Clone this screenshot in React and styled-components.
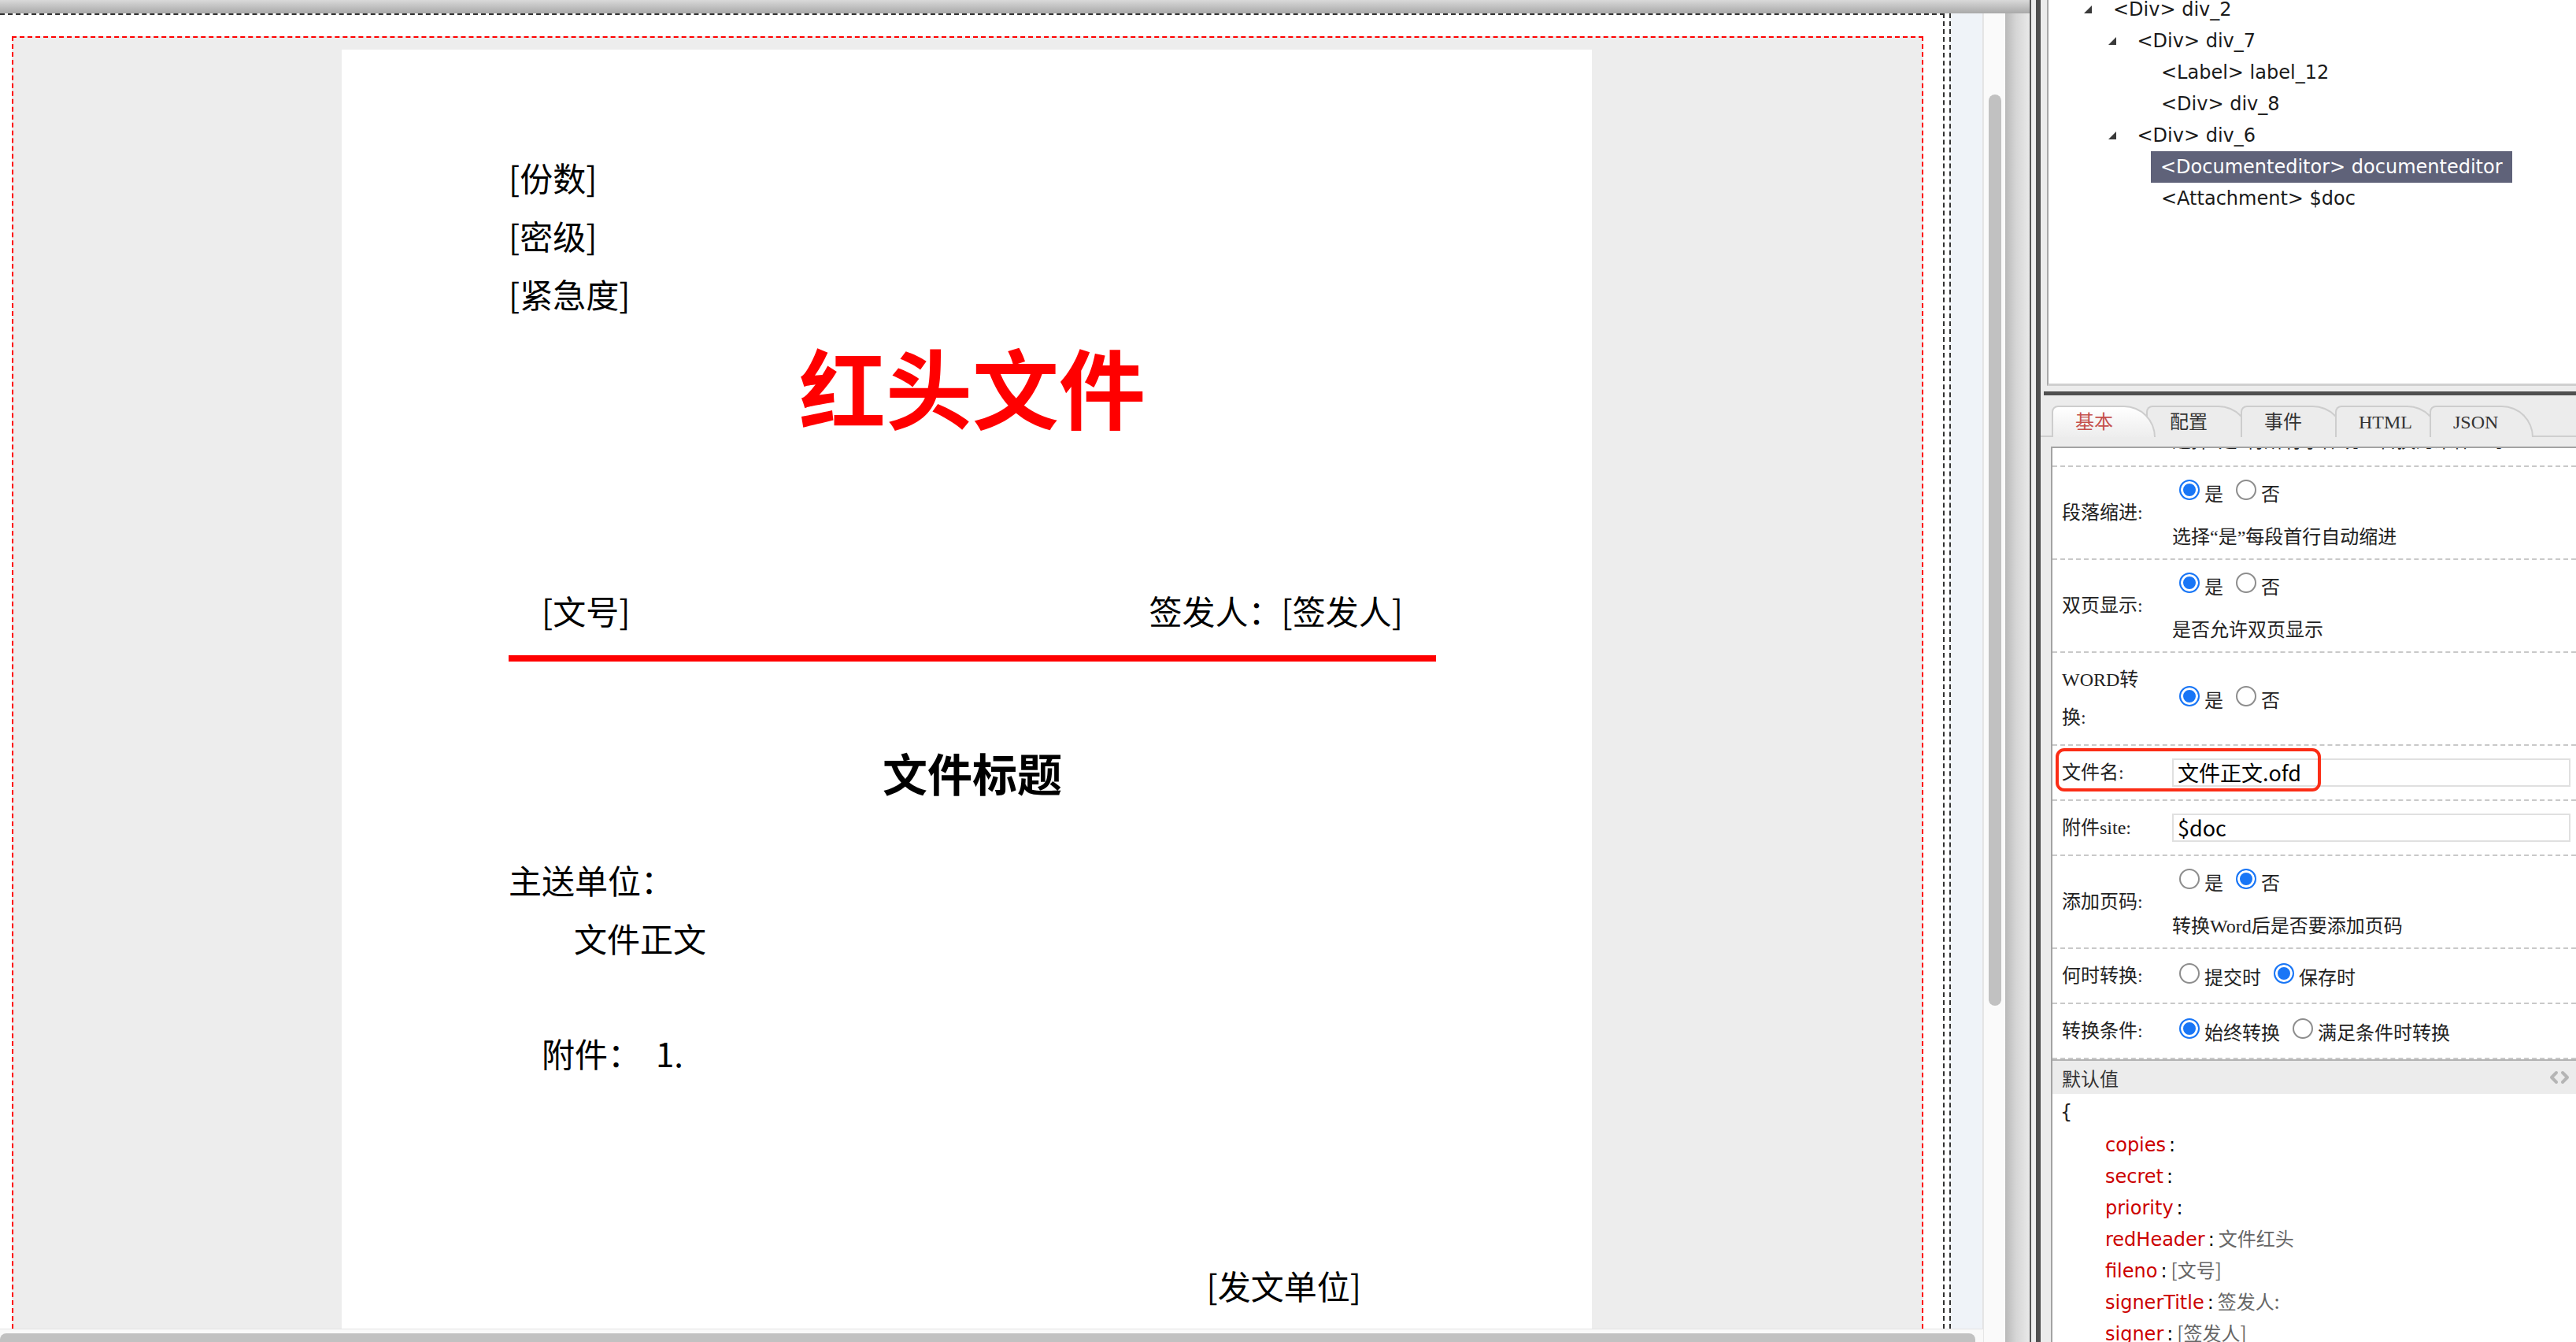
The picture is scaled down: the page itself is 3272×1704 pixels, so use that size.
/* --- Packages and Components --- */
import React from "react";
import styled, { createGlobalStyle } from "styled-components";

/* --- Data --- */
const treeData = [
  { level: 0, toggle: true, text: "<Div> div_2" },
  { level: 1, toggle: true, text: "<Div> div_7" },
  { level: 2, text: "<Label> label_12" },
  { level: 2, text: "<Div> div_8" },
  { level: 1, toggle: true, text: "<Div> div_6" },
  { level: 2, text: "<Documenteditor> documenteditor", selected: true },
  { level: 2, text: "<Attachment> $doc" }
];

const tabs = ["基本", "配置", "事件", "HTML", "JSON"];

const jsonRows = [
  ["copies", ""],
  ["secret", ""],
  ["priority", ""],
  ["redHeader", "文件红头"],
  ["fileno", "[文号]"],
  ["signerTitle", "签发人:"],
  ["signer", "[签发人]"]
];

const SERIF = `"Liberation Serif", "Noto Sans CJK SC", serif`;
const SANS = `"Noto Sans CJK SC", "Liberation Sans", sans-serif`;
const UI = `"DejaVu Sans", "Noto Sans CJK SC", sans-serif`;

/* --- Styles --- */
const GlobalStyle = createGlobalStyle`
  html, body {
    margin: 0;
    padding: 0;
    overflow: hidden;
    background: #fff;
  }
`;

const Screen = styled.div`
  display: flex;
  width: 3272px;
  height: 1704px;
  overflow: hidden;
`;

/* editor side */
const EditorColumn = styled.div`
  width: 2578px;
  display: flex;
  flex-direction: column;
`;

const TopStrip = styled.div`
  height: 17px;
  flex: none;
  background: linear-gradient(#d9d9d9, #a9a9a9);
`;

const EditorBody = styled.div`
  flex: 1;
  display: flex;
  min-height: 0;
`;

const Viewport = styled.div`
  width: 2519px;
  display: flex;
  flex-direction: column;
`;

const ViewRow = styled.div`
  flex: 1;
  display: flex;
  min-height: 0;
  overflow: hidden;
  background: #fff;
`;

const CanvasFrame = styled.div`
  width: 2470px;
  box-sizing: border-box;
  border-top: 2px dashed #333;
  border-right: 2px dashed #333;
  padding: 27px 0 0 15px;
  overflow: hidden;
`;

const RedBox = styled.div`
  width: 2428px;
  height: 100%;
  box-sizing: border-box;
  border: 2px dashed #ff0000;
  border-bottom: none;
  background: #ededed;
  padding: 15px 0 0 417px;
`;

const Gutter = styled.div`
  width: 6px;
  background: #fff;
`;

const SideStrip = styled.div`
  flex: 1;
  border-left: 2px dashed #333;
  border-right: 1px solid #e2e2e2;
  background: #eff3f8;
`;

const HScroll = styled.div`
  height: 17px;
  flex: none;
  box-sizing: border-box;
  border-top: 1px solid #e4e4e4;
  background: #f9f9f9;
  padding-top: 5px;
`;

const HThumb = styled.div`
  width: 2509px;
  height: 14px;
  border-radius: 8px 8px 0 0;
  background: #c1c1c1;
`;

const VScroll = styled.div`
  width: 28px;
  box-sizing: border-box;
  border-left: 1px solid #e6e6e6;
  background: #fafafa;
  padding: 103px 0 0 6px;
`;

const VThumb = styled.div`
  width: 16px;
  height: 1157px;
  border-radius: 8px;
  background: #c1c1c1;
`;

const ShadowEdge = styled.div`
  width: 31px;
  background: linear-gradient(to right, #b9b9b9, #d6d6d6 45%, #e9e9e9);
`;

/* document page */
const Page = styled.div`
  width: 1588px;
  height: 1800px;
  box-sizing: border-box;
  background: #fff;
  padding: 125px 198px 0 212px;
  font-family: ${SANS};
  color: #000;
`;

const MetaLine = styled.div`
  font-size: 42px;
  line-height: 74px;
`;

const RedTitle = styled.div`
  margin-top: 14px;
  text-align: center;
  font-size: 110px;
  font-weight: 700;
  line-height: 130px;
  color: #ff0000;
`;

const SignerRow = styled.div`
  margin-top: 191px;
  display: flex;
  justify-content: space-between;
  padding: 0 42px;
  font-size: 42px;
  line-height: 60px;
`;

const RedRule = styled.div`
  margin-top: 27px;
  height: 8px;
  background: #ff0000;
`;

const DocTitle = styled.div`
  margin-top: 100px;
  text-align: center;
  font-size: 57px;
  font-weight: 700;
  line-height: 80px;
`;

const Para = styled.div`
  font-size: 42px;
  line-height: 74px;
  margin-top: ${p => p.$mt || 0}px;
  padding-left: ${p => p.$indent || 0}px;
  padding-right: ${p => p.$right || 0}px;
  text-align: ${p => (p.$alignRight ? "right" : "left")};
`;

const Gap = styled.span`
  display: inline-block;
  width: 19px;
`;

/* splitter */
const Divider = styled.div`
  width: 14px;
  box-sizing: border-box;
  border-left: 2px solid #565656;
  border-right: 6px solid #4f4f4f;
  background: #ededed;
`;

/* right panel */
const RightPanel = styled.div`
  flex: 1;
  display: flex;
  flex-direction: column;
  background: #ececec;
  min-width: 0;
`;

const TreeBox = styled.div`
  height: 490px;
  flex: none;
  box-sizing: border-box;
  margin-left: 8px;
  border-left: 2px solid #a9a9a9;
  border-bottom: 3px solid #cfcfcf;
  background: #fff;
  overflow: hidden;
`;

const TreeList = styled.div`
  margin-top: -8px;
  font-family: ${UI};
  font-size: 24px;
  color: #1a1a1a;
`;

const TreeRow = styled.div`
  height: 40px;
  display: flex;
  align-items: center;
  padding-left: ${p => 44 + p.$level * 30.5}px;
  white-space: nowrap;
`;

const Toggle = styled.span`
  width: 12px;
  height: 12px;
  margin-right: 26px;
  display: inline-flex;
  flex: none;
`;

const TreeLabel = styled.span`
  height: 40px;
  line-height: 40px;
  ${p =>
    p.$selected &&
    `
    background: #5f6279;
    color: #fff;
    padding: 0 12px;
    margin-left: -13px;
  `}
`;

const DarkBar = styled.div`
  height: 5px;
  flex: none;
  margin: 7px 0 0 4px;
  background: #505050;
`;

const TabStrip = styled.div`
  height: 53px;
  flex: none;
  box-sizing: border-box;
  display: flex;
  align-items: flex-end;
  padding-left: 14px;
  border-bottom: 2px solid #cfcfcf;
`;

const Tab = styled.div`
  position: relative;
  z-index: ${p => (p.$active ? 3 : 1)};
  width: 132px;
  height: 40px;
  box-sizing: border-box;
  margin-left: ${p => (p.$first ? 0 : -12)}px;
  margin-bottom: -2px;
  padding-left: 28px;
  border: 2px solid #cdcdcd;
  border-bottom: none;
  border-radius: 8px 40px 0 0 / 8px 40px 0 0;
  background: ${p =>
    p.$active ? "linear-gradient(#ffffff, #ededed)" : "#ececec"};
  font-family: ${SERIF};
  font-size: 24px;
  line-height: 38px;
  color: ${p => (p.$active ? "#c5504d" : "#333")};
`;

const PropsBox = styled.div`
  flex: 1;
  min-height: 0;
  margin: 12px 0 0 13px;
  border-top: 2px solid #a3a3a3;
  border-left: 2px solid #a3a3a3;
  background: #fff;
  overflow: hidden;
  font-family: ${SERIF};
  font-size: 24px;
  color: #222;
`;

const ClippedRow = styled.div`
  height: 24px;
  box-sizing: border-box;
  border-bottom: 2px dashed #c9c9c9;
  overflow: hidden;
  padding-left: 152px;
`;

const ClippedText = styled.div`
  line-height: 30px;
  margin-top: -24px;
  white-space: nowrap;
`;

const PropRow = styled.div`
  position: relative;
  height: ${p => (p.$tall ? 118 : 70)}px;
  box-sizing: border-box;
  border-bottom: 2px dashed #c9c9c9;
  display: flex;
  align-items: center;
  padding: 0 7px 0 12px;
`;

const PropLabel = styled.div`
  width: 110px;
  margin-right: 30px;
  flex: none;
  line-height: 48px;
`;

const PropValue = styled.div`
  flex: 1;
  display: flex;
  flex-direction: column;
  gap: 6px;
  padding-top: ${p => (p.$tall ? 2 : 0)}px;
`;

const ValueLine = styled.div`
  height: 48px;
  display: flex;
  align-items: center;
  white-space: nowrap;
`;

const Option = styled.label`
  display: inline-flex;
  align-items: center;
  gap: 6px;
  margin: 0 16px 0 ${p => (p.$first ? 9 : 0)}px;
`;

const RadioDot = styled.span`
  width: 26px;
  height: 26px;
  box-sizing: border-box;
  border-radius: 50%;
  border: 2px solid ${p => (p.$on ? "#1976f6" : "#8d8d8d")};
  background: ${p => (p.$on ? "#1976f6" : "#fff")};
  box-shadow: ${p => (p.$on ? "inset 0 0 0 3px #fff" : "none")};
  margin-top: -6px;
`;

const TextBox = styled.div`
  flex: 1;
  height: 36px;
  box-sizing: border-box;
  border: 2px solid #e0e0e0;
  padding-left: 5px;
  font-family: ${SANS};
  font-size: 27px;
  line-height: 32px;
  color: #000;
`;

const Highlight = styled.div`
  position: absolute;
  left: 4px;
  top: 3px;
  width: 337px;
  height: 55px;
  box-sizing: border-box;
  border: 4px solid #fb2d16;
  border-radius: 11px;
  pointer-events: none;
`;

const SectionHead = styled.div`
  height: 44px;
  box-sizing: border-box;
  border-top: 2px solid #b3b3b3;
  background: #ececec;
  display: flex;
  align-items: center;
  justify-content: space-between;
  padding: 0 8px 0 12px;
  color: #333;
`;

const JsonBody = styled.div`
  padding: 3px 0 0 10px;
  font-family: ${UI};
  font-size: 24px;
`;

const JsonLine = styled.div`
  height: 40px;
  line-height: 40px;
  overflow: hidden;
  padding-left: ${p => (p.$inner ? 57 : 0)}px;
  white-space: nowrap;
`;

const JsonKey = styled.span`
  color: #cc0000;
`;

const JsonColon = styled.span`
  margin: 0 5px 0 4px;
  color: #000;
`;

const JsonValue = styled.span`
  color: #666;
  font-family: ${SANS};
`;

/* --- Component --- */
const TreeToggle = () => (
  <Toggle>
    <svg width="12" height="12" viewBox="0 0 12 12">
      <polygon points="11,1 11,11 1,11" fill="#3a3a3a" />
    </svg>
  </Toggle>
);

const Radios = ({ options, value }) =>
  options.map((o, i) => (
    <Option key={o} $first={i === 0}>
      <RadioDot $on={i === value} />
      {o}
    </Option>
  ));

const CodeIcon = () => (
  <svg width="26" height="18" viewBox="0 0 26 18">
    <path
      d="M9 3 L3 9 L9 15 M17 3 L23 9 L17 15"
      fill="none"
      stroke="#b5b5b5"
      strokeWidth="4"
      strokeLinecap="round"
      strokeLinejoin="round"
    />
  </svg>
);

function App() {
  return (
    <Screen>
      <GlobalStyle />

      <EditorColumn>
        <TopStrip />
        <EditorBody>
          <Viewport>
            <ViewRow>
              <CanvasFrame>
                <RedBox>
                  <Page>
                    <MetaLine>[份数]</MetaLine>
                    <MetaLine>[密级]</MetaLine>
                    <MetaLine>[紧急度]</MetaLine>
                    <RedTitle>红头文件</RedTitle>
                    <SignerRow>
                      <span>[文号]</span>
                      <span>签发人：[签发人]</span>
                    </SignerRow>
                    <RedRule />
                    <DocTitle>文件标题</DocTitle>
                    <Para $mt={60}>主送单位：</Para>
                    <Para $indent={83}>文件正文</Para>
                    <Para $mt={72} $indent={42}>
                      附件：<Gap />1.
                    </Para>
                    <Para $mt={221} $alignRight $right={95}>
                      [发文单位]
                    </Para>
                  </Page>
                </RedBox>
              </CanvasFrame>
              <Gutter />
              <SideStrip />
            </ViewRow>
            <HScroll>
              <HThumb />
            </HScroll>
          </Viewport>
          <VScroll>
            <VThumb />
          </VScroll>
          <ShadowEdge />
        </EditorBody>
      </EditorColumn>

      <Divider />

      <RightPanel>
        <TreeBox>
          <TreeList>
            {treeData.map(node => (
              <TreeRow key={node.text} $level={node.level}>
                {node.toggle ? <TreeToggle /> : <Toggle />}
                <TreeLabel $selected={node.selected}>{node.text}</TreeLabel>
              </TreeRow>
            ))}
          </TreeList>
        </TreeBox>

        <DarkBar />

        <TabStrip>
          {tabs.map((t, i) => (
            <Tab key={t} $first={i === 0} $active={i === 0}>
              {t}
            </Tab>
          ))}
        </TabStrip>

        <PropsBox>
          <ClippedRow>
            <ClippedText>选择“是”将所有字体统一转换为宋体显示</ClippedText>
          </ClippedRow>

          <PropRow $tall>
            <PropLabel>段落缩进:</PropLabel>
            <PropValue $tall>
              <ValueLine>
                <Radios options={["是", "否"]} value={0} />
              </ValueLine>
              <ValueLine>选择“是”每段首行自动缩进</ValueLine>
            </PropValue>
          </PropRow>

          <PropRow $tall>
            <PropLabel>双页显示:</PropLabel>
            <PropValue $tall>
              <ValueLine>
                <Radios options={["是", "否"]} value={0} />
              </ValueLine>
              <ValueLine>是否允许双页显示</ValueLine>
            </PropValue>
          </PropRow>

          <PropRow $tall>
            <PropLabel>WORD转换:</PropLabel>
            <PropValue>
              <ValueLine>
                <Radios options={["是", "否"]} value={0} />
              </ValueLine>
            </PropValue>
          </PropRow>

          <PropRow>
            <PropLabel>文件名:</PropLabel>
            <TextBox>文件正文.ofd</TextBox>
            <Highlight />
          </PropRow>

          <PropRow>
            <PropLabel>附件site:</PropLabel>
            <TextBox>$doc</TextBox>
          </PropRow>

          <PropRow $tall>
            <PropLabel>添加页码:</PropLabel>
            <PropValue $tall>
              <ValueLine>
                <Radios options={["是", "否"]} value={1} />
              </ValueLine>
              <ValueLine>转换Word后是否要添加页码</ValueLine>
            </PropValue>
          </PropRow>

          <PropRow>
            <PropLabel>何时转换:</PropLabel>
            <PropValue>
              <ValueLine>
                <Radios options={["提交时", "保存时"]} value={1} />
              </ValueLine>
            </PropValue>
          </PropRow>

          <PropRow>
            <PropLabel>转换条件:</PropLabel>
            <PropValue>
              <ValueLine>
                <Radios options={["始终转换", "满足条件时转换"]} value={0} />
              </ValueLine>
            </PropValue>
          </PropRow>

          <SectionHead>
            <span>默认值</span>
            <CodeIcon />
          </SectionHead>

          <JsonBody>
            <JsonLine>{"{"}</JsonLine>
            {jsonRows.map(([k, v]) => (
              <JsonLine key={k} $inner>
                <JsonKey>{k}</JsonKey>
                <JsonColon>:</JsonColon>
                <JsonValue>{v}</JsonValue>
              </JsonLine>
            ))}
          </JsonBody>
        </PropsBox>
      </RightPanel>
    </Screen>
  );
}

export default App;
